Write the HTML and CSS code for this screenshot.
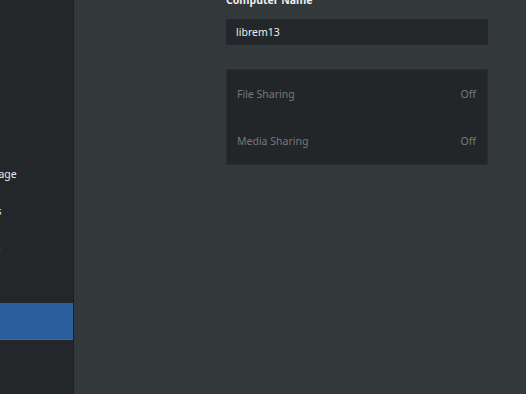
FILE: index.html
```html
<!DOCTYPE html>
<html>
<head>
<meta charset="utf-8">
<link rel="stylesheet" href="styles.css">
</head>
<body>
<div class="app">
  <nav class="sidebar">
    <ul class="nav-list">
      <li class="nav-item">Wi-Fi</li>
      <li class="nav-item">Bluetooth</li>
      <li class="nav-item">Background</li>
      <li class="nav-item">Notifications</li>
      <li class="nav-item">Search</li>
      <li class="nav-item">Region &amp; Language</li>
      <li class="nav-item">Universal Access</li>
      <li class="nav-item">Online Accounts</li>
      <li class="nav-item">Privacy</li>
      <li class="nav-item selected">Sharing</li>
      <li class="nav-item">Sound</li>
      <li class="nav-item">Power</li>
    </ul>
  </nav>
  <main class="content">
    <div class="column">
      <label class="field-label">Computer Name</label>
      <div class="entry">librem13</div>
      <div class="list-box">
        <div class="row"><span>File Sharing</span><span>Off</span></div>
        <div class="row"><span>Media Sharing</span><span>Off</span></div>
      </div>
    </div>
  </main>
</div>
</body>
</html>
```
FILE: styles.css
```css
* { box-sizing: border-box; }
html, body {
  margin: 0;
  padding: 0;
  width: 526px;
  height: 394px;
  overflow: hidden;
  background: #33383b;
  font-family: "Noto Sans", "DejaVu Sans", sans-serif;
  font-size: 10.5px;
}
.app {
  display: flex;
  height: 394px;
}
.sidebar {
  width: 74px;
  flex: none;
  background: #232729;
  border-right: 1px solid #1e2123;
  overflow: hidden;
}
.nav-list {
  list-style: none;
  margin: -30px 0 0 -92px;
  padding: 0;
  width: 166px;
}
.nav-item {
  height: 37px;
  display: flex;
  align-items: center;
  padding-left: 12px;
  color: #e8e8e7;
  white-space: nowrap;
}
.nav-item.selected {
  background: #2a5e9c;
  border-bottom: 1px solid #3a6ba6;
  color: #ffffff;
}
.content {
  flex: 1;
  padding-left: 152px;
}
.column {
  width: 262px;
  display: flex;
  flex-direction: column;
  margin-top: -7px;
}
.field-label {
  color: #eeeeec;
  font-weight: bold;
  height: 14px;
  line-height: 14px;
  margin-bottom: 12px;
}
.entry {
  height: 26px;
  background: #232729;
  border-radius: 2px;
  color: #eeeeec;
  padding-left: 10px;
  display: flex;
  align-items: center;
}
.list-box {
  margin-top: 24px;
  background: #222628;
  border: 1px solid #2a2e30;
  display: flex;
  flex-direction: column;
}
.row {
  height: 47px;
  display: flex;
  align-items: center;
  justify-content: space-between;
  padding: 0 11px 0 10px;
  color: #76797b;
}
```
